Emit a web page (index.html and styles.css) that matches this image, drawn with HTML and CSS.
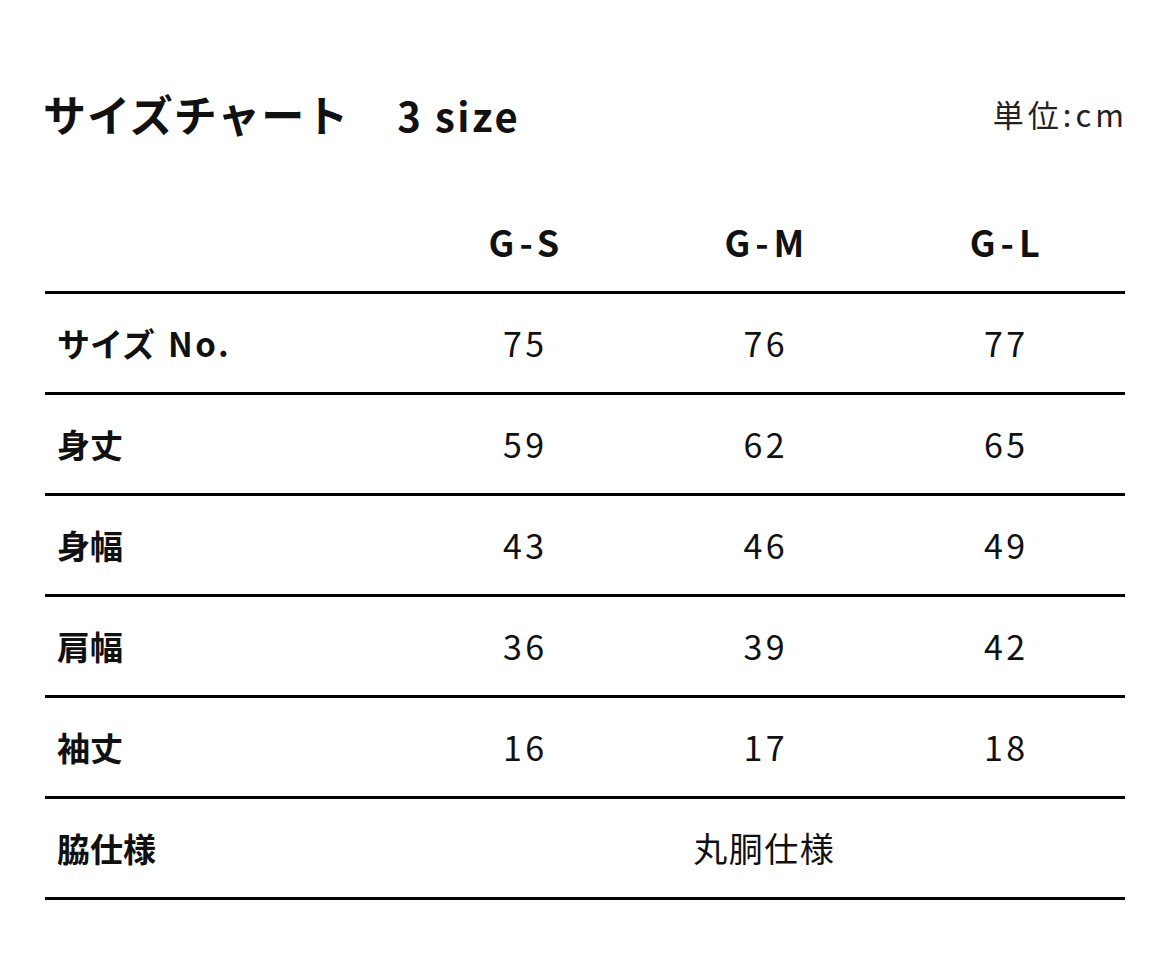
FILE: index.html
```html
<!DOCTYPE html>
<html lang="ja">
<head>
<meta charset="utf-8">
<title>サイズチャート</title>
<link rel="stylesheet" href="styles.css">
</head>
<body>
<div class="page">
  <div class="title-row">
    <h1 class="title">サイズチャート<span class="count">3 size</span></h1>
    <div class="unit">単位:cm</div>
  </div>
  <table class="chart">
    <thead>
      <tr>
        <th class="label"></th>
        <th>G-S</th>
        <th>G-M</th>
        <th>G-L</th>
      </tr>
    </thead>
    <tbody>
      <tr><th class="label">サイズ<span class="no">No.</span></th><td>75</td><td>76</td><td>77</td></tr>
      <tr><th class="label">身丈</th><td>59</td><td>62</td><td>65</td></tr>
      <tr><th class="label">身幅</th><td>43</td><td>46</td><td>49</td></tr>
      <tr><th class="label">肩幅</th><td>36</td><td>39</td><td>42</td></tr>
      <tr><th class="label">袖丈</th><td>16</td><td>17</td><td>18</td></tr>
      <tr><th class="label">脇仕様</th><td colspan="3" class="wide">丸胴仕様</td></tr>
    </tbody>
  </table>
</div>
</body>
</html>
```
FILE: styles.css
```css
* { box-sizing: border-box; }
html, body { margin: 0; padding: 0; background: #fff; }
body {
  font-family: "Noto Sans CJK JP", "Noto Sans", sans-serif;
  color: #111;
}
.page {
  padding: 79px 45px 0 45px;
}
.title-row {
  display: flex;
  justify-content: space-between;
  align-items: center;
  height: 68px;
}
.title {
  margin: 0;
  font-size: 43px;
  font-weight: 700;
  line-height: 1;
  letter-spacing: 1px;
  margin-left: -2px;
}
.count {
  margin-left: 48px;
  font-size: 40px;
  letter-spacing: 2.5px;
}
.unit {
  font-size: 31px;
  letter-spacing: 4px;
  margin-right: -3px;
  color: #222;
}
.chart {
  width: 1080px;
  border-collapse: collapse;
  margin-top: 44px;
}
.chart th, .chart td {
  height: 101px;
  text-align: center;
  padding: 0;
  vertical-align: middle;
}
.chart thead th {
  font-size: 36px;
  font-weight: 700;
  letter-spacing: 5px;
  padding-left: 5px;
  border-bottom: 3px solid #000;
}
.chart tbody th, .chart tbody td {
  border-bottom: 3px solid #000;
}
.chart .label {
  width: 358px;
  text-align: left;
  padding-left: 12px;
  font-size: 33px;
  font-weight: 700;
}
.chart .no {
  margin-left: 13px;
  letter-spacing: 2.5px;
}
.chart td {
  width: 240px;
  font-size: 34px;
  font-weight: 400;
  letter-spacing: 3.5px;
  padding-left: 3px;
}
.chart td.wide {
  letter-spacing: 1.5px;
  font-size: 34px;
  padding-left: 0;
}
```
